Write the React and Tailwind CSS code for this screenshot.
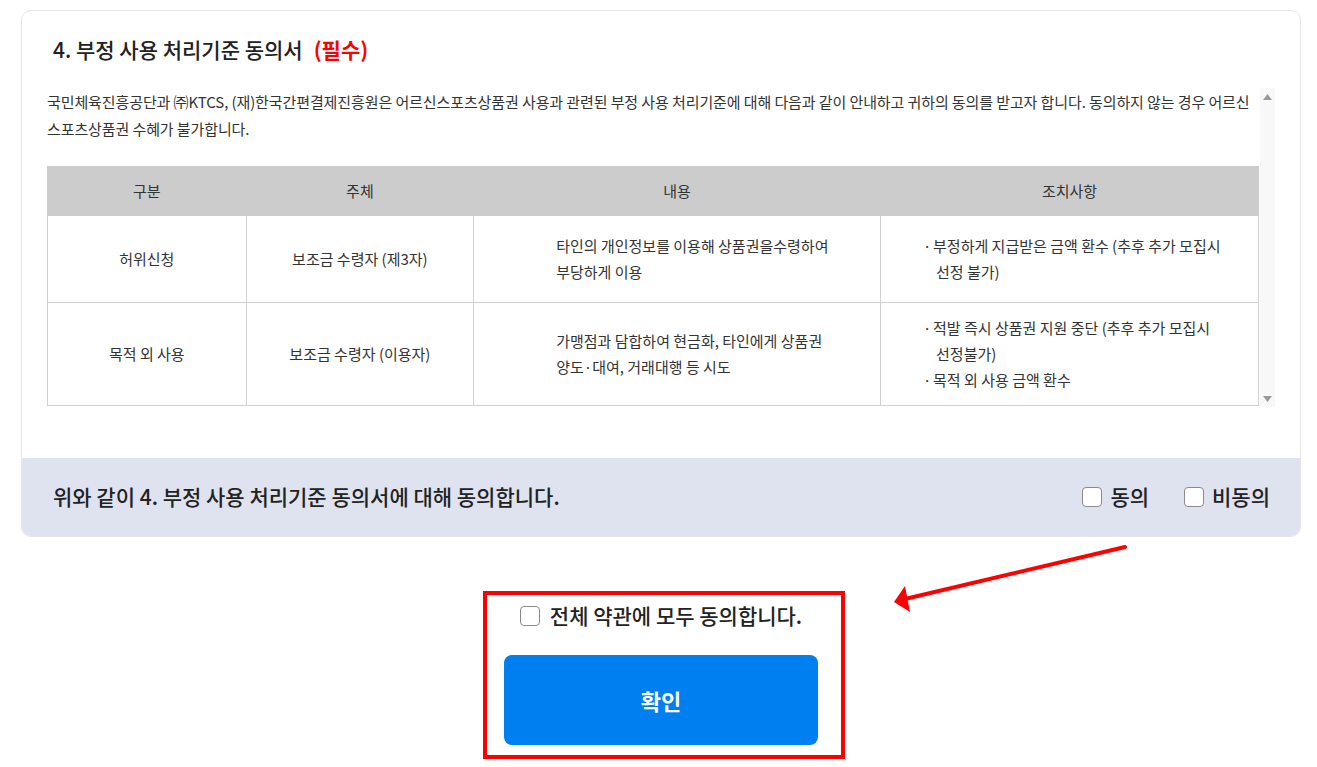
import React from "react";

function Box() {
  return <span className="inline-block w-[20px] h-[20px] rounded-[4px] border border-[#8a8a8a] bg-white shrink-0" />;
}

function Bullet({ children }) {
  return (
    <div className="flex">
      <span className="w-[10px] shrink-0">·</span>
      <span>{children}</span>
    </div>
  );
}

export default function App() {
  return (
    <div className="relative min-h-screen bg-white font-['Noto_Sans_CJK_KR','Noto_Sans',sans-serif] text-[#222]">
      <div className="pt-[10px] pl-[21px]">
        <div className="w-[1280px] border border-[#e6e6e6] rounded-[10px] overflow-hidden bg-white">
          <div className="px-[25px] pt-[23px]">
            <h2 className="pl-[6px] flex items-center text-[21px] leading-[30px] font-medium text-[#222]">
              <span>4. 부정 사용 처리기준 동의서</span>
              <span className="ml-[11px] text-[#ff0000] font-bold">(필수)</span>
            </h2>
            <div className="mt-[24px] flex h-[319px]">
              <div className="flex-1 overflow-hidden">
                <p className="text-[15px] leading-[27px] text-[#333] tracking-[-0.1px]">
                  <span className="block whitespace-nowrap">
                    국민체육진흥공단과 ㈜KTCS, (재)한국간편결제진흥원은 어르신스포츠상품권 사용과 관련된 부정 사용 처리기준에 대해 다음과 같이 안내하고 귀하의 동의를 받고자 합니다. 동의하지 않는 경우 어르신
                  </span>
                  <span className="block whitespace-nowrap">스포츠상품권 수혜가 불가합니다.</span>
                </p>
                <table className="mt-[24px] w-[1212px] border-collapse text-[15px] leading-[26px] text-[#333]">
                  <colgroup>
                    <col className="w-[199px]" />
                    <col className="w-[228px]" />
                    <col className="w-[407px]" />
                    <col className="w-[378px]" />
                  </colgroup>
                  <thead>
                    <tr className="h-[49px] bg-[#cccccc]">
                      <th className="font-normal text-center border border-[#cccccc]">구분</th>
                      <th className="font-normal text-center border border-[#cccccc]">주체</th>
                      <th className="font-normal text-center border border-[#cccccc]">내용</th>
                      <th className="font-normal text-center border border-[#cccccc]">조치사항</th>
                    </tr>
                  </thead>
                  <tbody>
                    <tr className="h-[87px]">
                      <td className="border border-[#d0d0d0] text-center">허위신청</td>
                      <td className="border border-[#d0d0d0] text-center">보조금 수령자 (제3자)</td>
                      <td className="border border-[#d0d0d0] pl-[82px] text-left whitespace-nowrap">
                        타인의 개인정보를 이용해 상품권을수령하여
                        <br />
                        부당하게 이용
                      </td>
                      <td className="border border-[#d0d0d0] pl-[42px] text-left whitespace-nowrap">
                        <Bullet>
                          부정하게 지급받은 금액 환수 (추후 추가 모집시
                          <br />
                          <span className="pl-[3px]">선정 불가)</span>
                        </Bullet>
                      </td>
                    </tr>
                    <tr className="h-[103px]">
                      <td className="border border-[#d0d0d0] text-center">목적 외 사용</td>
                      <td className="border border-[#d0d0d0] text-center">보조금 수령자 (이용자)</td>
                      <td className="border border-[#d0d0d0] pl-[82px] text-left whitespace-nowrap">
                        가맹점과 담합하여 현금화, 타인에게 상품권
                        <br />
                        양도·대여, 거래대행 등 시도
                      </td>
                      <td className="border border-[#d0d0d0] pl-[42px] text-left whitespace-nowrap">
                        <Bullet>
                          적발 즉시 상품권 지원 중단 (추후 추가 모집시
                          <br />
                          <span className="pl-[3px]">선정불가)</span>
                        </Bullet>
                        <Bullet>목적 외 사용 금액 환수</Bullet>
                      </td>
                    </tr>
                  </tbody>
                </table>
              </div>
              <div className="w-[15px] bg-[#f8f8f8] flex flex-col justify-between items-center pt-[6px] pb-[5px]">
                <svg width="9" height="6" viewBox="0 0 9 6">
                  <polygon points="4.5,0 9,6 0,6" fill="#999" />
                </svg>
                <svg width="9" height="6" viewBox="0 0 9 6">
                  <polygon points="0,0 9,0 4.5,6" fill="#999" />
                </svg>
              </div>
            </div>
            <div className="h-[51px]" />
          </div>
          <div className="h-[78px] bg-[#dee3ef] flex items-center justify-between pl-[31px] pr-[30px]">
            <span className="text-[21px] font-medium text-[#222]">
              위와 같이 4. 부정 사용 처리기준 동의서에 대해 동의합니다.
            </span>
            <div className="flex items-center">
              <label className="flex items-center gap-[8px] text-[21px] font-medium text-[#222]">
                <Box />
                동의
              </label>
              <label className="ml-[35px] flex items-center gap-[8px] text-[21px] font-medium text-[#222]">
                <Box />
                비동의
              </label>
            </div>
          </div>
        </div>

        <div className="w-[1280px] flex justify-center pl-[6px] mt-[54px]">
          <div className="w-[362px] h-[168px] border-4 border-[#ff0000] pl-[17px] pr-[23px] pt-[6px] pb-[10px] flex flex-col">
            <div className="h-[30px] flex items-center justify-center gap-[10px]">
              <Box />
              <span className="text-[21px] font-medium text-[#222]">전체 약관에 모두 동의합니다.</span>
            </div>
            <button className="mt-[24px] w-[314px] h-[90px] rounded-[8px] bg-[#0080f0] text-white text-[22px] font-bold">
              확인
            </button>
          </div>
        </div>
      </div>

      <svg className="absolute left-0 top-0 pointer-events-none" width="1317" height="767" viewBox="0 0 1317 767">
        <line x1="1125" y1="547" x2="905" y2="599" stroke="#ff0000" strokeWidth="4" strokeLinecap="round" />
        <polygon points="894,602 905,586 910,612" fill="#ff0000" />
      </svg>
    </div>
  );
}
